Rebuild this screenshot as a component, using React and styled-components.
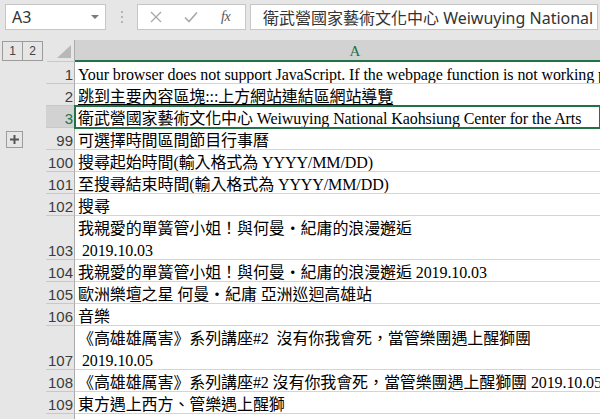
import React from 'react';
import styled, { createGlobalStyle } from 'styled-components';

const GREEN = '#217346';
const CELL_FONT = '"Liberation Serif", "Noto Sans CJK TC", serif';
const UI_FONT = '"Noto Sans", "Noto Sans CJK TC", sans-serif';

const Global = createGlobalStyle`
  html, body { margin: 0; padding: 0; background: #fff; }
  body { overflow: hidden; }
`;

const Sheet = styled.div`
  width: 600px;
  height: 419px;
  overflow: hidden;
  background: #e6e6e6;
  display: flex;
  flex-direction: column;
`;

const FormulaBar = styled.div`
  height: 40px;
  flex-shrink: 0;
  box-sizing: border-box;
  padding-top: 4px;
  display: flex;
  align-items: flex-start;
`;

const NameBox = styled.div`
  margin-left: 5px;
  width: 101px;
  height: 26px;
  box-sizing: border-box;
  background: #fff;
  border: 1px solid #c6c6c6;
  display: flex;
  align-items: center;
  justify-content: space-between;
  padding: 0 6px 0 6px;
  font-family: ${UI_FONT};
  font-size: 16px;
  color: #333;
`;

const Caret = styled.span`
  width: 0;
  height: 0;
  border-left: 4px solid transparent;
  border-right: 4px solid transparent;
  border-top: 4px solid #7a7a7a;
`;

const Grip = styled.div`
  margin-left: 15px;
  height: 26px;
  display: flex;
  flex-direction: column;
  justify-content: center;
  gap: 3px;
`;

const GripDot = styled.span`
  width: 2px;
  height: 2px;
  background: #b4b4b4;
`;

const FxBox = styled.div`
  margin-left: 14px;
  width: 109px;
  height: 26px;
  box-sizing: border-box;
  background: #fff;
  border: 1px solid #c6c6c6;
  display: flex;
  align-items: center;
  padding-left: 12px;
  gap: 22px;
`;

const FxLabel = styled.span`
  font-family: "Liberation Serif", serif;
  font-style: italic;
  font-size: 14px;
  color: #555;
  letter-spacing: -0.5px;
  margin-left: 1px;
`;

const FormulaInput = styled.div`
  margin-left: 4px;
  margin-right: 2px;
  flex: 1;
  min-width: 0;
  height: 26px;
  box-sizing: border-box;
  background: #fff;
  border: 1px solid #c6c6c6;
  display: flex;
  align-items: center;
  padding-left: 12px;
  overflow: hidden;
  white-space: nowrap;
  font-family: ${UI_FONT};
  font-size: 16px;
  color: #333;
`;

const HeaderRow = styled.div`
  height: 22px;
  flex-shrink: 0;
  display: flex;
`;

const OutlineHead = styled.div`
  width: 47px;
  flex-shrink: 0;
  display: flex;
  align-items: flex-start;
  padding: 1px 0 0 2px;
  box-sizing: border-box;
`;

const LevelButton = styled.div`
  width: 21px;
  height: 20px;
  box-sizing: border-box;
  border: 1px solid #9c9c9c;
  margin-right: -1px;
  display: flex;
  align-items: center;
  justify-content: center;
  font-family: "Liberation Sans", sans-serif;
  font-size: 12px;
  color: #444;
`;

const Corner = styled.div`
  width: 28px;
  flex-shrink: 0;
  box-sizing: border-box;
  border-bottom: 1px solid #c8c8c8;
  border-right: 1px solid #ababab;
  display: flex;
  align-items: flex-end;
  justify-content: flex-end;
  padding: 0 3px 3px 0;
`;

const ColHeader = styled.div`
  width: 560px;
  flex-shrink: 0;
  box-sizing: border-box;
  background: #d2d2d2;
  border-bottom: 2px solid ${GREEN};
  display: flex;
  align-items: center;
  justify-content: center;
  padding-top: 2px;
  font-family: "Liberation Serif", serif;
  font-size: 15px;
  color: ${GREEN};
`;

const Body = styled.div`
  display: flex;
  flex-direction: column;
  flex-shrink: 0;
`;

const Row = styled.div`
  display: flex;
  height: ${p => p.$lines * 22}px;
  flex-shrink: 0;
`;

const OutlineCell = styled.div`
  width: 46px;
  flex-shrink: 0;
  display: flex;
  align-items: center;
  padding-left: 6px;
  box-sizing: border-box;
`;

const PlusBox = styled.div`
  width: 17px;
  height: 17px;
  box-sizing: border-box;
  border: 1px solid #9c9c9c;
  display: flex;
  align-items: center;
  justify-content: center;
`;

const RowHeader = styled.div`
  width: 29px;
  flex-shrink: 0;
  box-sizing: border-box;
  background: ${p => (p.$active ? '#d2d2d2' : '#e6e6e6')};
  border-bottom: 1px solid #c8c8c8;
  border-right: 1px solid #ababab;
  display: flex;
  align-items: flex-end;
  justify-content: flex-end;
  padding-right: 1px;
  font-family: "Liberation Sans", sans-serif;
  font-size: 15px;
  color: ${p => (p.$active ? GREEN : '#3c3c3c')};
`;

const RowNum = styled.span`
  line-height: 22px;
  margin-bottom: -3px;
`;

const Cell = styled.div`
  flex: 1;
  min-width: 0;
  box-sizing: border-box;
  background: #fff;
  border-bottom: 1px solid #d4d4d4;
  padding: 2px 0 0 3px;
  overflow: hidden;
  white-space: pre;
  font-family: ${CELL_FONT};
  font-size: 16px;
  line-height: 22px;
  letter-spacing: -0.1px;
  color: #000;
  text-decoration: ${p => (p.$link ? 'underline' : 'none')};
  text-underline-offset: 2px;
  ${p =>
    p.$selected &&
    `
    position: relative;
    z-index: 1;
    outline: 2px solid ${GREEN};
    outline-offset: -1px;
  `}
`;

const rows = [
  { n: '1', lines: ['Your browser does not support JavaScript. If the webpage function is not working properly, please enable JavaScript'] },
  { n: '2', lines: ['跳到主要內容區塊:::上方網站連結區網站導覽'], link: true },
  { n: '3', lines: ['衛武營國家藝術文化中心 Weiwuying National Kaohsiung Center for the Arts'], selected: true },
  { n: '99', lines: ['可選擇時間區間節目行事曆'], plus: true },
  { n: '100', lines: ['搜尋起始時間(輸入格式為 YYYY/MM/DD)'] },
  { n: '101', lines: ['至搜尋結束時間(輸入格式為 YYYY/MM/DD)'] },
  { n: '102', lines: ['搜尋'] },
  { n: '103', lines: ['我親愛的單簧管小姐！與何曼・紀庸的浪漫邂逅', ' 2019.10.03'] },
  { n: '104', lines: ['我親愛的單簧管小姐！與何曼・紀庸的浪漫邂逅 2019.10.03'] },
  { n: '105', lines: ['歐洲樂壇之星 何曼・紀庸 亞洲巡迴高雄站'] },
  { n: '106', lines: ['音樂'] },
  { n: '107', lines: ['《高雄雄厲害》系列講座#2  沒有你我會死，當管樂團遇上醒獅團', ' 2019.10.05'] },
  { n: '108', lines: ['《高雄雄厲害》系列講座#2 沒有你我會死，當管樂團遇上醒獅團 2019.10.05'] },
  { n: '109', lines: ['東方遇上西方、管樂遇上醒獅'] },
  { n: '', lines: [''] },
];

const CrossIcon = () => (
  <svg width="12" height="12" viewBox="0 0 12 12">
    <path d="M1 1 L11 11 M11 1 L1 11" stroke="#a8a8a8" strokeWidth="1.3" fill="none" />
  </svg>
);

const CheckIcon = () => (
  <svg width="14" height="12" viewBox="0 0 14 12">
    <path d="M1 6.5 L5 10.5 L13 1.5" stroke="#a8a8a8" strokeWidth="1.6" fill="none" />
  </svg>
);

const CornerTriangle = () => (
  <svg width="14" height="13" viewBox="0 0 14 13">
    <polygon points="14,0 14,13 0,13" fill="#b8b8b8" />
  </svg>
);

const PlusIcon = () => (
  <svg width="9" height="9" viewBox="0 0 9 9">
    <path d="M0 4.5 H9 M4.5 0 V9" stroke="#555" strokeWidth="2" />
  </svg>
);

export default function App() {
  return (
    <>
      <Global />
      <Sheet>
        <FormulaBar>
          <NameBox>
            <span>A3</span>
            <Caret />
          </NameBox>
          <Grip>
            <GripDot />
            <GripDot />
            <GripDot />
          </Grip>
          <FxBox>
            <CrossIcon />
            <CheckIcon />
            <FxLabel>fx</FxLabel>
          </FxBox>
          <FormulaInput>衛武營國家藝術文化中心 Weiwuying National Kaohsiung Center for the Arts</FormulaInput>
        </FormulaBar>
        <HeaderRow>
          <OutlineHead>
            <LevelButton>1</LevelButton>
            <LevelButton>2</LevelButton>
          </OutlineHead>
          <Corner>
            <CornerTriangle />
          </Corner>
          <ColHeader>A</ColHeader>
        </HeaderRow>
        <Body>
          {rows.map((r, i) => (
            <Row key={i} $lines={r.lines.length}>
              <OutlineCell>
                {r.plus && (
                  <PlusBox>
                    <PlusIcon />
                  </PlusBox>
                )}
              </OutlineCell>
              <RowHeader $active={r.selected}>
                <RowNum>{r.n}</RowNum>
              </RowHeader>
              <Cell $link={r.link} $selected={r.selected}>
                {r.lines.join('\n')}
              </Cell>
            </Row>
          ))}
        </Body>
      </Sheet>
    </>
  );
}
